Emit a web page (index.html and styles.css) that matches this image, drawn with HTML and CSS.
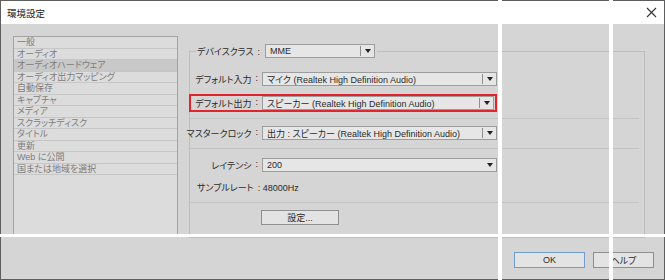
FILE: index.html
```html
<!DOCTYPE html>
<html lang="ja">
<head>
    <meta charset="UTF-8">
    <title>環境設定</title>
    <link rel="stylesheet" href="styles.css">
</head>
<body>
    <div class="dialog">
        <div class="titlebar">
            <span class="title">環境設定</span>
            <svg class="close" width="11" height="11" viewBox="0 0 11 11">
                <path d="M1 1 L10 10 M10 1 L1 10" stroke="#333" stroke-width="1.1" fill="none"/>
            </svg>
        </div>

        <div class="content">
            <ul class="categories">
                <li>一般</li>
                <li>オーディオ</li>
                <li class="selected">オーディオハードウェア</li>
                <li>オーディオ出力マッピング</li>
                <li>自動保存</li>
                <li>キャプチャ</li>
                <li>メディア</li>
                <li>スクラッチディスク</li>
                <li>タイトル</li>
                <li>更新</li>
                <li>Web に公開</li>
                <li>国または地域を選択</li>
            </ul>

            <fieldset class="group">
                <legend class="legend-row">
                    <span class="legend-label">デバイスクラス<span class="colon">:</span></span>
                    <div class="select short">
                        <span class="value">MME</span>
                        <span class="divider"></span>
                        <svg class="arrow" width="6" height="4" viewBox="0 0 6 4"><path d="M0 0 H6 L3 4 Z" fill="#222"/></svg>
                    </div>
                </legend>

                <div class="row first">
                    <span class="label">デフォルト入力<span class="colon">:</span></span>
                    <div class="select">
                        <span class="value">マイク (Realtek High Definition Audio)</span>
                        <span class="divider"></span>
                        <svg class="arrow" width="6" height="4" viewBox="0 0 6 4"><path d="M0 0 H6 L3 4 Z" fill="#222"/></svg>
                    </div>
                </div>

                <div class="row highlight">
                    <span class="label">デフォルト出力<span class="colon">:</span></span>
                    <div class="select">
                        <span class="value">スピーカー (Realtek High Definition Audio)</span>
                        <span class="divider"></span>
                        <svg class="arrow" width="6" height="4" viewBox="0 0 6 4"><path d="M0 0 H6 L3 4 Z" fill="#222"/></svg>
                    </div>
                </div>

                <hr class="sep sep-1">

                <div class="row">
                    <span class="label">マスタークロック<span class="colon">:</span></span>
                    <div class="select">
                        <span class="value">出力 : スピーカー (Realtek High Definition Audio)</span>
                        <span class="divider"></span>
                        <svg class="arrow" width="6" height="4" viewBox="0 0 6 4"><path d="M0 0 H6 L3 4 Z" fill="#222"/></svg>
                    </div>
                </div>

                <hr class="sep sep-2">

                <div class="row latency">
                    <span class="label">レイテンシ<span class="colon">:</span></span>
                    <div class="select">
                        <span class="value">200</span>
                        <svg class="arrow" width="6" height="4" viewBox="0 0 6 4"><path d="M0 0 H6 L3 4 Z" fill="#222"/></svg>
                    </div>
                </div>

                <div class="rate">サンプルレート<span class="colon">:</span> 48000Hz</div>

                <hr class="sep sep-3">

                <button class="btn settings">設定...</button>
            </fieldset>
        </div>

        <div class="footer">
            <button class="btn ok">OK</button>
            <button class="btn help">ヘルプ</button>
        </div>
    </div>

    <!-- white stripes crossing the capture -->
    <div class="stripe stripe-v1"></div>
    <div class="stripe stripe-v2"></div>
    <div class="stripe stripe-h"></div>
</body>
</html>
```

FILE: styles.css
```css
/* Page */
body {
    margin: 0;
    position: relative;
    width: 665px;
    height: 280px;
    overflow: hidden;
    font-family: "Liberation Sans", "Noto Sans CJK JP", sans-serif;
    font-size: 9px;
    font-feature-settings: "palt";
    color: #2a2a2a;
}

/* Dialog frame */
.dialog {
    box-sizing: border-box;
    width: 665px;
    height: 280px;
    border: 1px solid #5e5e5e;
    background: #d5d5d5;
    display: flex;
    flex-direction: column;
}

.titlebar {
    height: 23px;
    background: #ffffff;
    display: flex;
    align-items: center;
    justify-content: space-between;
    padding: 0 6px 0 6px;
}

.title {
    font-size: 9.5px;
    color: #222;
    padding-top: 1px;
}

.close {
    margin-right: 1px;
}

/* Main area */
.content {
    display: flex;
    height: 214px;
    padding-left: 12px;
    box-sizing: border-box;
}

/* Category list */
.categories {
    list-style: none;
    margin: 12px 0 0 0;
    padding: 0;
    width: 165px;
    height: 200px;
    box-sizing: border-box;
    border: 1px solid #a3a3a3;
    background: #dcdcdc;
}

.categories li {
    box-sizing: border-box;
    height: 11.5px;
    line-height: 10.5px;
    padding-left: 3px;
    border-bottom: 1px solid #c6c6c6;
    color: #7c7c7c;
    white-space: nowrap;
}

.categories li.selected {
    background: #c8c8c8;
}

/* Settings group */
.group {
    margin: 20px 0 0 11px;
    padding: 0 5px 0 6px;
    width: 456px;
    box-sizing: border-box;
    border: 1px solid #bdbdbd;
    min-width: 0;
}

.legend-row {
    display: flex;
    align-items: center;
    padding: 0 2px 0 0;
    height: 14px;
}

.legend-label {
    margin-right: 5px;
    padding-left: 1px;
}

.colon {
    margin-left: 4px;
}

.row {
    display: flex;
    align-items: center;
}

.row.first {
    margin-top: 14px;
}

.label {
    flex: 0 0 62px;
    min-width: 0;
    display: flex;
    justify-content: flex-end;
    margin-right: 4px;
    white-space: nowrap;
}

/* Drop-downs */
.select {
    box-sizing: border-box;
    width: 235px;
    height: 14px;
    border: 1px solid #9c9c9c;
    background: #e6e6e6;
    display: flex;
    align-items: center;
    padding-left: 4px;
}

.select.short {
    width: 110px;
}

.select .value {
    flex: 1;
    white-space: nowrap;
    overflow: hidden;
}

.select .divider {
    width: 1px;
    height: 10px;
    background: #8e8e8e;
    margin-right: 4px;
}

.select .arrow {
    margin-right: 3px;
}

.row.highlight {
    width: fit-content;
    border: 2px solid #e0262c;
    margin: 8px 0 0 -7px;
    padding: 0 1px 0 5px;
}

.row.highlight .select {
    width: 232px;
}

/* Separators */
.sep {
    border: none;
    height: 1px;
    background: #c3c3c3;
    margin: 0 0 0 -6px;
}

.sep-1 {
    margin-top: 6px;
    margin-bottom: 7px;
}

.sep-2 {
    margin-top: 8px;
    margin-bottom: 9px;
}

.sep-3 {
    margin-top: 8px;
    margin-bottom: 7px;
}

.rate {
    margin-top: 10px;
    height: 12px;
    line-height: 12px;
    padding-left: 1px;
}

/* Buttons */
.btn {
    box-sizing: border-box;
    font-family: "Liberation Sans", "Noto Sans CJK JP", sans-serif;
    font-size: 9px;
    font-feature-settings: "palt";
    color: #2a2a2a;
    background: #e3e3e3;
    border: 1px solid #8f8f8f;
    padding: 0;
    height: 15px;
}

.settings {
    width: 78px;
    margin-left: 65px;
}

.footer {
    display: flex;
    justify-content: flex-end;
    gap: 8px;
    padding: 14px 10px 0 0;
}

.footer .btn {
    height: 16px;
}

.ok {
    width: 71px;
    border-color: #6f9fcf;
}

.help {
    width: 61px;
}

/* White stripes over the capture */
.stripe {
    position: absolute;
    background: #ffffff;
}

.stripe-v1 {
    left: 498px;
    top: 0;
    width: 4px;
    height: 280px;
}

.stripe-v2 {
    left: 609px;
    top: 0;
    width: 4px;
    height: 280px;
}

.stripe-h {
    left: 0;
    top: 234px;
    width: 665px;
    height: 3px;
}
```
